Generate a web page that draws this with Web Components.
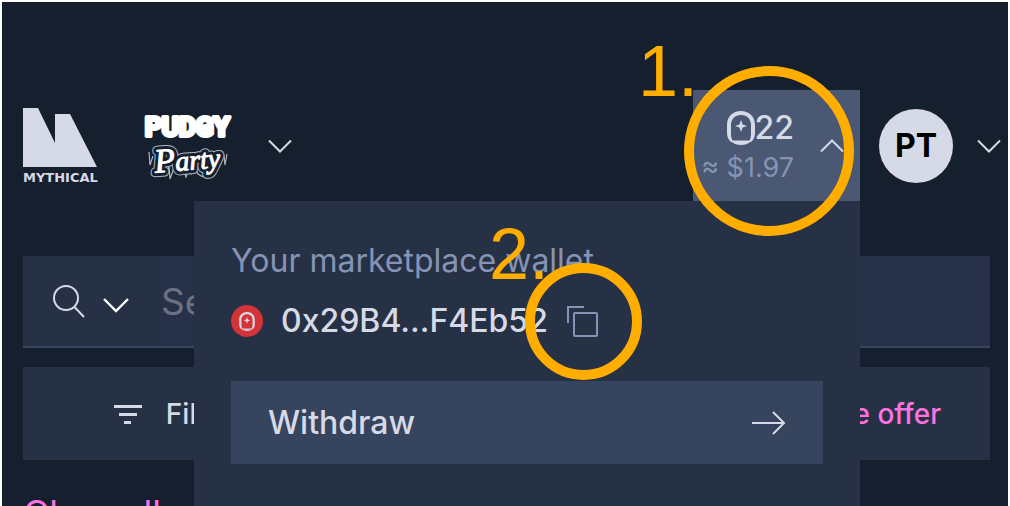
<!DOCTYPE html>
<html lang="en">
<head>
<meta charset="utf-8">
<title>Marketplace</title>
<style>
  html {
    --color-bg: #161f2e;
    --color-panel: #273145;
    --color-row: #37445d;
    --color-active: #4a5873;
    --color-text: #d6dae6;
    --color-muted: #8593b4;
    --color-pink: #ff72e1;
    --color-red: #d23438;
    --color-mark: #ffae00;
  }
  body {
    margin: 0;
    font-family: Inter, "Liberation Sans", sans-serif;
    color: var(--color-text);
    overflow: hidden;
  }
</style>
</head>
<body>

<market-page>
  <market-header slot="header">
    <mythical-logo></mythical-logo>
    <game-picker></game-picker>
    <wallet-balance slot="account" amount="22" value="≈ $1.97">
      <wallet-menu address="0x29B4...F4Eb52">Your marketplace wallet</wallet-menu>
    </wallet-balance>
    <user-avatar slot="account">PT</user-avatar>
  </market-header>
  <search-bar></search-bar>
  <filter-bar></filter-bar>
  <clear-link>Clear all</clear-link>
  <step-mark slot="marks" style="--x:638px; --y:35px; --size:170px; --cx:684px; --cy:66px">1.</step-mark>
  <step-mark slot="marks" style="--x:489px; --y:218px; --size:117px; --cx:525px; --cy:263px">2.</step-mark>
</market-page>

<script>
const base = `
:host,*,*::before,*::after{
  box-sizing: border-box;
}
button,input{
  font: inherit;
  color: inherit;
  background: none;
  border: 0;
  padding: 0;
  margin: 0;
}
button{ cursor: pointer; }
svg{
  display: block;
  flex: none;
  overflow: visible;
}
`;

const define = (name, html, setup) => {
  const template = document.createElement("template");
  template.innerHTML = html;
  customElements.define(name, class extends HTMLElement {
    constructor() {
      super();
      this.$root = this.attachShadow({ mode: "open" });
      this.$root.appendChild(template.content.cloneNode(true));
    }
    connectedCallback() {
      if (setup) setup(this, this.$root);
    }
  });
};

const chevron = (dir = "down") => `
<svg width="24" height="14" viewBox="0 0 24 14" fill="none" stroke="currentColor" stroke-width="2" aria-hidden="true">
  <path d="${dir === "up" ? "M1 12.5 12 1.5 23 12.5" : "M1 1.5 12 12.5 23 1.5"}"/>
</svg>`;

// the arched token with a four-pointed star in it
const token = (width, height) => `
<svg width="${width}" height="${height}" viewBox="0 0 28 34" fill="currentColor" aria-hidden="true">
  <path fill-rule="evenodd" d="M0 14C0 5.500 6 0 14 0s14 5.500 14 14v8c0 4-1.500 7-4 9H4c-2.500-2-4-5-4-9zM4 14v8c0 3 .5 5.500 1.500 7.500h17c1-2 1.500-4.500 1.500-7.500v-8c0-6-4-10-10-10S4 8 4 14z"/>
  <path d="M5 31h18c-2 2-5 3-9 3s-7-1-9-3z"/>
  <path d="M14 9l1.600 4.400L20 15l-4.400 1.600L14 21l-1.600-4.400L8 15l4.400-1.600z"/>
</svg>`;

define("market-page", `
<style>${base}
:host{
  display: block;
  position: relative;
  height: 100vh;
  overflow: hidden;
  background: var(--color-bg);
  border: 2px solid #fff;
  border-bottom: 0;
}
main{
  display: flex;
  flex-direction: column;
  gap: 19px;
  padding: 55px 18px 0 21px;
}
</style>
<slot name="header"></slot>
<main><slot></slot></main>
<slot name="marks"></slot>
`);

define("market-header", `
<style>${base}
:host{
  display: block;
  padding: 88px 7px 0 21px;
}
header,nav,div{
  display: flex;
  align-items: center;
}
header{
  justify-content: space-between;
  height: 111px;
}
nav{ gap: 46px; }
div{ gap: 19px; }
</style>
<header>
  <nav><slot></slot></nav>
  <div><slot name="account"></slot></div>
</header>
`);

define("mythical-logo", `
<style>${base}
:host{ display: block; }
a{
  display: flex;
  flex-direction: column;
  gap: 4px;
  padding-top: 2px;
  color: inherit;
  text-decoration: none;
  font: bold 13px/14px "DejaVu Sans", sans-serif;
}
</style>
<a href="#">
  <svg width="74" height="59" viewBox="0 0 74 59" fill="currentColor" aria-hidden="true">
    <path d="M0 0h15l17 35V6h15l27 53H0z"/>
  </svg>
  <span>MYTHICAL</span>
</a>
`);

define("game-picker", `
<style>${base}
:host{ display: block; }
button{
  display: flex;
  align-items: center;
  gap: 36px;
}
.top{
  font: bold 26px Roboto, sans-serif;
  fill: #fff;
  stroke: #fff;
  stroke-width: 4;
  stroke-linejoin: round;
}
.script{
  font: italic 28px "Liberation Serif", serif;
  stroke-linejoin: round;
}
.script .big{ font-size: 34px; }
</style>
<button type="button" aria-label="Choose game">
  <svg width="88" height="68" viewBox="0 0 88 68">
    <text class="top" x="1" y="24">PUDGY</text>
    <!-- ice hanging under the script line -->
    <path d="M5 40l1 13 3-9M13 55c1 12 10 10 12-1l1 13 4-11 4 3 5-3 3 9 3-8 2 5 3-7 4 7c6 5 14 3 16-5l6-10 4-3 1 9 2-11" fill="none" stroke="#aeb4c0" stroke-width="1.200"/>
    <g class="script" transform="rotate(-5 44 56)">
      <text x="11" y="58" fill="#aeb4c0" stroke="#aeb4c0" stroke-width="9"><tspan class="big">P</tspan>arty</text>
      <text x="11" y="58" fill="#161f2e" stroke="#161f2e" stroke-width="7"><tspan class="big">P</tspan>arty</text>
      <text x="11" y="58" fill="#fff" stroke="#fff" stroke-width="1"><tspan class="big">P</tspan>arty</text>
    </g>
  </svg>
  ${chevron()}
</button>
`);

define("wallet-balance", `
<style>${base}
:host{
  display: block;
  position: relative;
}
button{
  display: flex;
  align-items: center;
  gap: 26px;
  height: 111px;
  padding: 0 16px 0 8px;
  background: var(--color-active);
}
.sums{
  display: flex;
  flex-direction: column;
  align-items: flex-end;
  padding-top: 4px;
  line-height: 40px;
}
.amount{
  display: flex;
  align-items: center;
  font-size: 32px;
  font-weight: 500;
}
.value{
  font-size: 27px;
  color: var(--color-muted);
  white-space: nowrap;
}
.menu{
  position: absolute;
  top: 100%;
  right: 0;
}
</style>
<button type="button" aria-expanded="true">
  <span class="sums">
    <span class="amount">${token(28, 34)}<span id="amount"></span></span>
    <span class="value" id="value"></span>
  </span>
  ${chevron("up")}
</button>
<div class="menu"><slot></slot></div>
`, (el, root) => {
  root.getElementById("amount").textContent = el.getAttribute("amount");
  root.getElementById("value").textContent = el.getAttribute("value");
});

define("wallet-menu", `
<style>${base}
:host{
  display: block;
  width: 666px;
  padding: 40px 37px 100px;
  background: var(--color-panel);
  font-size: 32px;
  line-height: 40px;
}
.label{ color: var(--color-muted); }
.address{
  display: flex;
  align-items: center;
  gap: 18px;
  margin: 20px 0 40px;
  font-weight: 500;
}
.badge{
  display: grid;
  place-items: center;
  width: 32px;
  height: 32px;
  border-radius: 50%;
  background: var(--color-red);
}
.copy{ color: var(--color-muted); }
.withdraw{
  display: flex;
  align-items: center;
  justify-content: space-between;
  width: 100%;
  height: 83px;
  padding: 0 37px;
  background: var(--color-row);
  font-weight: 500;
}
</style>
<div class="label"><slot></slot></div>
<div class="address">
  <span class="badge">${token(16, 19)}</span>
  <span id="address"></span>
  <button class="copy" type="button" aria-label="Copy address">
    <svg width="32" height="32" viewBox="0 0 32 32" fill="none" stroke="currentColor" stroke-width="2">
      <rect x="8" y="8" width="23" height="23" rx="1"/>
      <path d="M2 18V2h16"/>
    </svg>
  </button>
</div>
<button class="withdraw" type="button">
  <span>Withdraw</span>
  <svg width="34" height="24" viewBox="0 0 34 24" fill="none" stroke="currentColor" stroke-width="2" aria-hidden="true">
    <path d="M0 12h32M21 1l11 11-11 11"/>
  </svg>
</button>
`, (el, root) => {
  root.getElementById("address").textContent = el.getAttribute("address");
});

define("user-avatar", `
<style>${base}
:host{ display: block; }
button{
  display: flex;
  align-items: center;
  gap: 24px;
}
.face{
  display: grid;
  place-items: center;
  width: 74px;
  height: 74px;
  border-radius: 50%;
  background: var(--color-text);
  color: #000;
  font-size: 32px;
  font-weight: 700;
}
</style>
<button type="button" aria-label="Account">
  <span class="face"><slot></slot></span>
  ${chevron()}
</button>
`);

define("search-bar", `
<style>${base}
:host{ display: block; }
form{
  display: flex;
  align-items: center;
  height: 92px;
  padding-left: 30px;
  background: var(--color-panel);
  border-bottom: 2px solid var(--color-row);
}
.scope{
  padding: 8px 0 0;
  margin: 0 32px 0 18px;
  color: #fff;
}
input{
  flex: 1;
  min-width: 0;
  height: 100%;
  font-size: 37px;
  background: #27314a;
  outline: 0;
}
input::placeholder{
  color: #6c7182;
  opacity: 1;
}
</style>
<form>
  <svg width="32" height="34" viewBox="0 0 32 34" fill="none" stroke="currentColor" stroke-width="2" aria-hidden="true">
    <circle cx="13" cy="14" r="12"/>
    <path d="M21.500 23 31 33"/>
  </svg>
  <button class="scope" type="button" aria-label="Search in">
    <svg width="26" height="14" viewBox="0 0 26 14" fill="none" stroke="currentColor" stroke-width="2.400">
      <path d="M1 1 13 13 25 1"/>
    </svg>
  </button>
  <input type="text" placeholder="Search" aria-label="Search">
</form>
`);

define("filter-bar", `
<style>${base}
:host{ display: block; }
div{
  display: grid;
  grid-template-columns: repeat(3, 1fr);
  height: 93px;
  background: var(--color-panel);
  font-size: 28px;
  font-weight: 500;
}
button{
  display: flex;
  align-items: center;
  justify-content: center;
  gap: 24px;
  padding-right: 6px;
}
.offer{
  grid-column: 3;
  justify-content: flex-end;
  padding-right: 49px;
  color: var(--color-pink);
}
</style>
<div>
  <button type="button">
    <svg width="28" height="20" viewBox="0 0 28 20" fill="currentColor" aria-hidden="true">
      <path d="M0 1h28v3H0zM5 9h18v3H5zM10 17h7v3h-7z"/>
    </svg>
    <span>Filters</span>
  </button>
  <button class="offer" type="button">
    <svg width="28" height="28" viewBox="0 0 28 28" fill="none" stroke="currentColor" stroke-width="2" aria-hidden="true">
      <path d="M14 3v22M3 14h22"/>
    </svg>
    <span>Create offer</span>
  </button>
</div>
`);

define("clear-link", `
<style>${base}
:host{
  display: block;
  font-size: 36px;
  line-height: 44px;
  padding-top: 12px;
}
a{
  color: var(--color-pink);
  text-decoration: none;
}
</style>
<a href="#"><slot></slot></a>
`);

// numbered ring laid over the page
define("step-mark", `
<style>${base}
:host{
  font: 72px/72px "Liberation Sans", Arial, sans-serif;
  color: var(--color-mark);
  pointer-events: none;
}
.number,.ring{
  position: absolute;
  margin: -2px 0 0 -2px;
}
.number{
  left: var(--x);
  top: var(--y);
}
.ring{
  left: var(--cx);
  top: var(--cy);
  width: var(--size);
  height: var(--size);
  border: 10px solid currentColor;
  border-radius: 50%;
}
</style>
<span class="number"><slot></slot></span>
<span class="ring"></span>
`);
</script>
</body>
</html>
